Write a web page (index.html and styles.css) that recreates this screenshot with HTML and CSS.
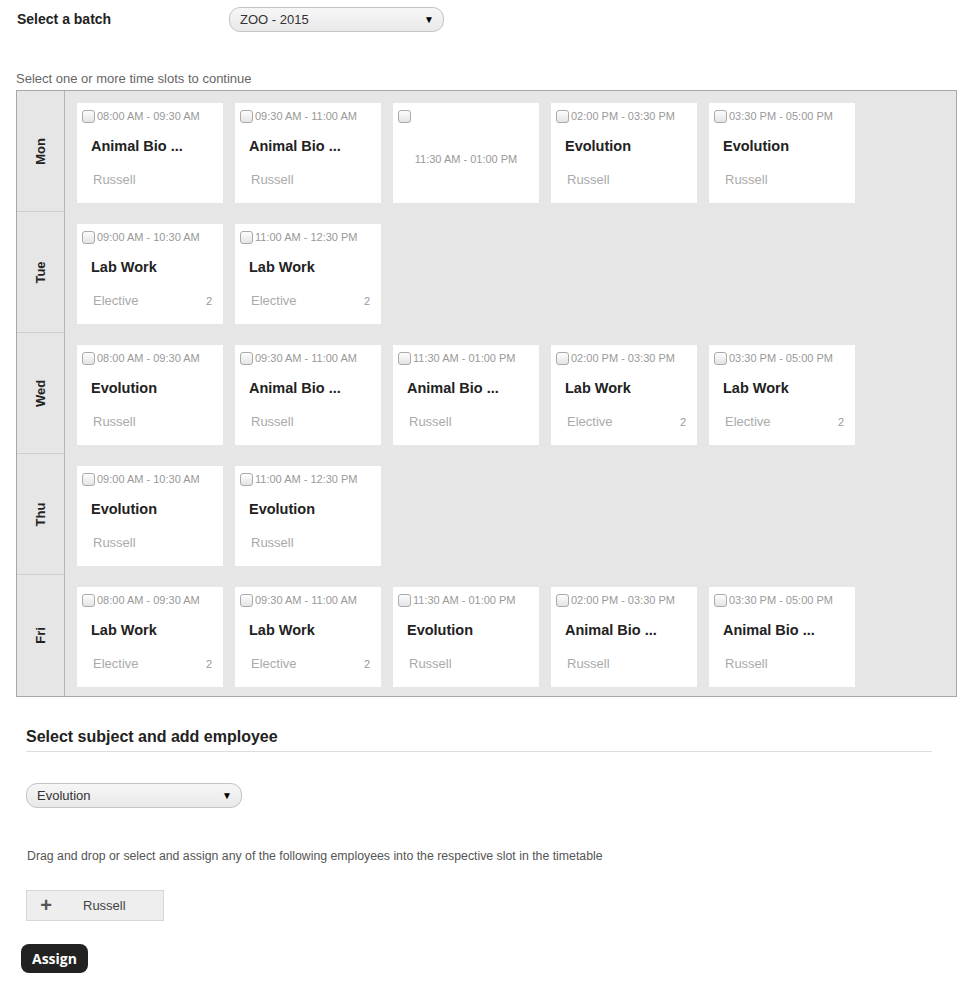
FILE: index.html
```html
<!DOCTYPE html>
<html lang="en">
<head>
    <meta charset="UTF-8">
    <title>Timetable - Assign employees</title>
    <link rel="stylesheet" href="styles.css">
</head>
<body>
    <div class="page">
        <div class="batch-row">
            <div class="batch-label">Select a batch</div>
            <div class="select select-batch"><span>ZOO - 2015</span><span class="arrow">&#9660;</span></div>
        </div>

        <p class="note">Select one or more time slots to continue</p>

        <div class="timetable">
            <div class="day-row">
                <div class="day"><span>Mon</span></div>
                <div class="slots">
                    <div class="slot">
                        <div class="slot-head"><input type="checkbox"><span>08:00 AM - 09:30 AM</span></div>
                        <div class="slot-title">Animal Bio ...</div>
                        <div class="slot-foot"><span>Russell</span></div>
                    </div>
                    <div class="slot">
                        <div class="slot-head"><input type="checkbox"><span>09:30 AM - 11:00 AM</span></div>
                        <div class="slot-title">Animal Bio ...</div>
                        <div class="slot-foot"><span>Russell</span></div>
                    </div>
                    <div class="slot slot-empty">
                        <div class="slot-head"><input type="checkbox"></div>
                        <div class="slot-time">11:30 AM - 01:00 PM</div>
                    </div>
                    <div class="slot">
                        <div class="slot-head"><input type="checkbox"><span>02:00 PM - 03:30 PM</span></div>
                        <div class="slot-title">Evolution</div>
                        <div class="slot-foot"><span>Russell</span></div>
                    </div>
                    <div class="slot">
                        <div class="slot-head"><input type="checkbox"><span>03:30 PM - 05:00 PM</span></div>
                        <div class="slot-title">Evolution</div>
                        <div class="slot-foot"><span>Russell</span></div>
                    </div>
                </div>
            </div>

            <div class="day-row">
                <div class="day"><span>Tue</span></div>
                <div class="slots">
                    <div class="slot">
                        <div class="slot-head"><input type="checkbox"><span>09:00 AM - 10:30 AM</span></div>
                        <div class="slot-title">Lab Work</div>
                        <div class="slot-foot"><span>Elective</span><span class="count">2</span></div>
                    </div>
                    <div class="slot">
                        <div class="slot-head"><input type="checkbox"><span>11:00 AM - 12:30 PM</span></div>
                        <div class="slot-title">Lab Work</div>
                        <div class="slot-foot"><span>Elective</span><span class="count">2</span></div>
                    </div>
                </div>
            </div>

            <div class="day-row">
                <div class="day"><span>Wed</span></div>
                <div class="slots">
                    <div class="slot">
                        <div class="slot-head"><input type="checkbox"><span>08:00 AM - 09:30 AM</span></div>
                        <div class="slot-title">Evolution</div>
                        <div class="slot-foot"><span>Russell</span></div>
                    </div>
                    <div class="slot">
                        <div class="slot-head"><input type="checkbox"><span>09:30 AM - 11:00 AM</span></div>
                        <div class="slot-title">Animal Bio ...</div>
                        <div class="slot-foot"><span>Russell</span></div>
                    </div>
                    <div class="slot">
                        <div class="slot-head"><input type="checkbox"><span>11:30 AM - 01:00 PM</span></div>
                        <div class="slot-title">Animal Bio ...</div>
                        <div class="slot-foot"><span>Russell</span></div>
                    </div>
                    <div class="slot">
                        <div class="slot-head"><input type="checkbox"><span>02:00 PM - 03:30 PM</span></div>
                        <div class="slot-title">Lab Work</div>
                        <div class="slot-foot"><span>Elective</span><span class="count">2</span></div>
                    </div>
                    <div class="slot">
                        <div class="slot-head"><input type="checkbox"><span>03:30 PM - 05:00 PM</span></div>
                        <div class="slot-title">Lab Work</div>
                        <div class="slot-foot"><span>Elective</span><span class="count">2</span></div>
                    </div>
                </div>
            </div>

            <div class="day-row">
                <div class="day"><span>Thu</span></div>
                <div class="slots">
                    <div class="slot">
                        <div class="slot-head"><input type="checkbox"><span>09:00 AM - 10:30 AM</span></div>
                        <div class="slot-title">Evolution</div>
                        <div class="slot-foot"><span>Russell</span></div>
                    </div>
                    <div class="slot">
                        <div class="slot-head"><input type="checkbox"><span>11:00 AM - 12:30 PM</span></div>
                        <div class="slot-title">Evolution</div>
                        <div class="slot-foot"><span>Russell</span></div>
                    </div>
                </div>
            </div>

            <div class="day-row">
                <div class="day"><span>Fri</span></div>
                <div class="slots">
                    <div class="slot">
                        <div class="slot-head"><input type="checkbox"><span>08:00 AM - 09:30 AM</span></div>
                        <div class="slot-title">Lab Work</div>
                        <div class="slot-foot"><span>Elective</span><span class="count">2</span></div>
                    </div>
                    <div class="slot">
                        <div class="slot-head"><input type="checkbox"><span>09:30 AM - 11:00 AM</span></div>
                        <div class="slot-title">Lab Work</div>
                        <div class="slot-foot"><span>Elective</span><span class="count">2</span></div>
                    </div>
                    <div class="slot">
                        <div class="slot-head"><input type="checkbox"><span>11:30 AM - 01:00 PM</span></div>
                        <div class="slot-title">Evolution</div>
                        <div class="slot-foot"><span>Russell</span></div>
                    </div>
                    <div class="slot">
                        <div class="slot-head"><input type="checkbox"><span>02:00 PM - 03:30 PM</span></div>
                        <div class="slot-title">Animal Bio ...</div>
                        <div class="slot-foot"><span>Russell</span></div>
                    </div>
                    <div class="slot">
                        <div class="slot-head"><input type="checkbox"><span>03:30 PM - 05:00 PM</span></div>
                        <div class="slot-title">Animal Bio ...</div>
                        <div class="slot-foot"><span>Russell</span></div>
                    </div>
                </div>
            </div>
        </div>

        <div class="assign-section">
            <h2>Select subject and add employee</h2>
            <div class="select select-subject"><span>Evolution</span><span class="arrow">&#9660;</span></div>
            <p class="hint">Drag and drop or select and assign any of the following employees into the respective slot in the timetable</p>
            <div class="employee"><span class="plus">+</span><span>Russell</span></div>
            <button type="button" class="assign-btn">Assign</button>
        </div>
    </div>
</body>
</html>
```

FILE: styles.css
```css
body {
    margin: 0;
    font-family: 'Liberation Sans', Arial, sans-serif;
    color: #333;
    background: #fff;
}

.page {
    padding: 7px 13px 0 16px;
}

/* batch selector */
.batch-row {
    display: flex;
    align-items: center;
    height: 25px;
}

.batch-label {
    width: 212px;
    padding-left: 1px;
    padding-bottom: 2px;
    font-size: 14px;
    font-weight: bold;
    color: #222;
}

.select {
    display: flex;
    align-items: center;
    justify-content: space-between;
    box-sizing: border-box;
    height: 25px;
    padding: 0 9px 0 10px;
    border: 1px solid #c4c4c4;
    border-radius: 11px;
    background: linear-gradient(#f6f6f6, #e9e9e9);
    font-size: 13px;
    color: #333;
}

.select-batch {
    width: 215px;
}

.arrow {
    font-size: 10px;
    color: #000;
}

.note {
    margin: 39px 0 3px;
    font-size: 13px;
    line-height: 16px;
    color: #666;
}

/* timetable */
.timetable {
    width: 941px;
    box-sizing: border-box;
    border: 1px solid #a8a8a8;
    background: #e6e6e6;
}

.day-row {
    display: flex;
    height: 121px;
}

.day {
    width: 48px;
    flex-shrink: 0;
    box-sizing: border-box;
    border-right: 1px solid #b5b5b5;
    border-bottom: 1px solid #cfcfcf;
    display: flex;
    align-items: center;
    justify-content: center;
}

.day-row:last-child .day {
    border-bottom: none;
}

.day span {
    transform: rotate(-90deg);
    font-size: 13px;
    font-weight: bold;
    color: #222;
}

.slots {
    display: flex;
    gap: 12px;
    padding: 12px 0 0 12px;
}

.slot {
    width: 146px;
    height: 100px;
    box-sizing: border-box;
    padding: 6px 5px;
    background: #fff;
}

.slot-head {
    display: flex;
    align-items: center;
    gap: 2px;
    height: 14px;
    font-size: 11px;
    color: #999;
}

.slot-head input {
    appearance: none;
    -webkit-appearance: none;
    width: 13px;
    height: 13px;
    margin: 0;
    border: 1px solid #aaa;
    border-radius: 3px;
    background: linear-gradient(#fdfdfd, #e4e4e4);
}

.slot-title {
    margin: 14px 0 0 9px;
    font-size: 14.5px;
    line-height: 18px;
    font-weight: bold;
    color: #222;
}

.slot-foot {
    display: flex;
    justify-content: space-between;
    align-items: baseline;
    margin: 17px 0 0 11px;
    padding-right: 6px;
    font-size: 13px;
    line-height: 16px;
    color: #aaa;
}

.count {
    font-size: 11px;
    color: #999;
}

.slot-time {
    margin-top: 29px;
    text-align: center;
    font-size: 11px;
    line-height: 14px;
    color: #999;
}

/* subject + employees */
.assign-section {
    margin: 0 25px 0 10px;
}

.assign-section h2 {
    margin: 30px 0 0;
    padding-bottom: 4px;
    border-bottom: 1px solid #ddd;
    font-size: 16px;
    line-height: 20px;
    color: #222;
}

.select-subject {
    width: 216px;
    margin-top: 31px;
}

.hint {
    margin: 41px 0 0 1px;
    font-size: 12.3px;
    line-height: 15px;
    color: #555;
}

.employee {
    display: flex;
    align-items: center;
    width: 138px;
    height: 31px;
    box-sizing: border-box;
    margin-top: 26px;
    border: 1px solid #d6d6d6;
    background: #eee;
    font-size: 13px;
    color: #444;
}

.plus {
    width: 38px;
    margin-right: 18px;
    text-align: center;
    font-size: 20px;
    font-weight: bold;
    color: #555;
}

.assign-btn {
    display: block;
    margin: 23px 0 0 -5px;
    padding: 0 11px;
    height: 29px;
    border: none;
    border-radius: 8px;
    background: #222;
    color: #fff;
    font-family: 'Open Sans', sans-serif;
    font-size: 14px;
    font-weight: bold;
}
```
